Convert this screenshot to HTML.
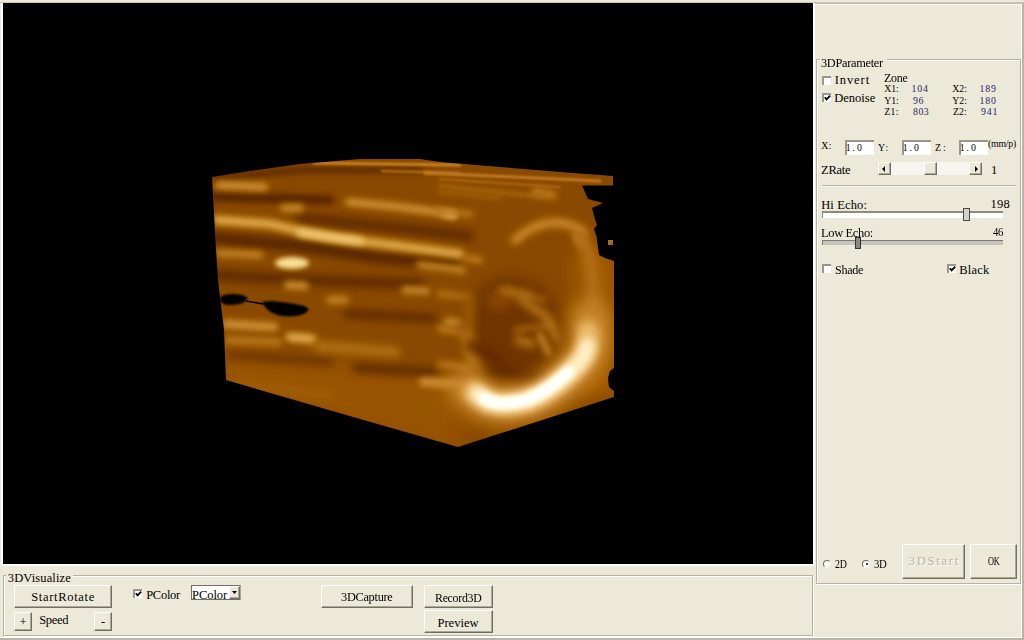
<!DOCTYPE html>
<html><head><meta charset="utf-8"><style>
*{margin:0;padding:0;box-sizing:border-box}
html,body{width:1024px;height:640px;overflow:hidden;background:#ECE9D8;position:relative}
.a{position:absolute}
.t{position:absolute;font-family:"Liberation Serif",serif;white-space:pre;-webkit-text-stroke:0}
.t.n{font-size:12.5px;line-height:12.5px}
.t.s{font-size:9.8px;line-height:9.8px}
.btn{position:absolute;background:#ECE9D8;border-top:1px solid #fff;border-left:1px solid #fff;border-right:1px solid #716F64;border-bottom:1px solid #716F64;box-shadow:inset -1px -1px 0 #ACA899}
.gb{position:absolute;border:1px solid #B5B2A3;box-shadow:inset 1px 1px 0 #fff, 1px 1px 0 #fff}
.cb{position:absolute;width:9px;height:9px;background:#fff;border-top:2px solid #9A9788;border-left:2px solid #9A9788}
.ed{position:absolute;background:#fff;border-top:2px solid #9A9788;border-left:2px solid #9A9788}
.rd{position:absolute;width:8px;height:8px;border-radius:50%;background:#fff;border-top:1px solid #6E6C62;border-left:1px solid #6E6C62;border-right:1px solid #F4F3EE;border-bottom:1px solid #F4F3EE}
</style></head><body>
<div class="a" style="left:0;top:2px;width:1024px;height:1px;background:#C9C6B6"></div>
<div class="a" style="left:1px;top:3px;width:2px;height:563px;background:#fff"></div>
<div class="a" id="vp" style="left:3px;top:3px;width:810px;height:561px;background:#000"></div>
<div class="a" style="left:813px;top:3px;width:2px;height:563px;background:#fff"></div>
<div class="a" style="left:3px;top:564px;width:812px;height:2px;background:#fff"></div>
<div class="a" style="left:815px;top:3px;width:208px;height:1px;background:#C0BDAE"></div>
<div class="a" style="left:815px;top:4px;width:207px;height:1px;background:#F8F7F2"></div>
<div class="a" style="left:1021px;top:4px;width:1px;height:634px;background:#fff"></div>
<div class="a" style="left:1022px;top:3px;width:2px;height:637px;background:#B8B5A6"></div>
<div class="a" style="left:0;top:637px;width:1022px;height:1px;background:#fff"></div>
<div class="a" style="left:0;top:638px;width:1024px;height:2px;background:#B8B5A6"></div>

<div class="gb" style="left:816px;top:59px;width:205px;height:525px"></div>
<div class="a" style="left:820px;top:54px;width:67px;height:10px;background:#ECE9D8"></div>

<div class="cb" style="left:822px;top:76px"></div>
<div class="cb" style="left:822px;top:93px"></div>
<svg class="a" style="left:822px;top:93px" width="10" height="10"><path d="M2.8 4.2 L4.6 6.4 L8.2 2.6" stroke="#000" stroke-width="1.8" fill="none"/></svg>

<div class="ed" style="left:845px;top:140px;width:29px;height:15px"></div>
<div class="ed" style="left:902px;top:140px;width:29px;height:15px"></div>
<div class="ed" style="left:959px;top:140px;width:29px;height:15px"></div>

<div class="a" style="left:878px;top:162px;width:104px;height:13px;background:#F6F5F0"></div>
<div class="btn" style="left:878px;top:162px;width:13px;height:13px"></div>
<svg class="a" style="left:882px;top:166px" width="4" height="6"><path d="M3 0 L3 6 L0 3Z" fill="#000"/></svg>
<div class="btn" style="left:924px;top:162px;width:13px;height:13px"></div>
<div class="btn" style="left:969px;top:162px;width:13px;height:13px"></div>
<svg class="a" style="left:975px;top:166px" width="4" height="6"><path d="M0 0 L0 6 L3 3Z" fill="#000"/></svg>

<div class="a" style="left:822px;top:185px;width:194px;height:1px;background:#B5B2A3"></div>
<div class="a" style="left:822px;top:186px;width:194px;height:1px;background:#fff"></div>

<div class="a" style="left:822px;top:211px;width:181px;height:7px;background:#fff;border-top:2px solid #8E8B7C;border-left:1px solid #8E8B7C"></div>
<div class="a" style="left:963px;top:208px;width:7px;height:13px;background:#D2D1CC;border:1px solid #4A4A48"></div>

<div class="a" style="left:822px;top:240px;width:181px;height:5px;background:#C6C4BC;border-top:1px solid #7C7A6E;border-left:1px solid #7C7A6E"></div>
<div class="a" style="left:855px;top:237px;width:6px;height:12px;background:#8A8985;border:1px solid #333"></div>

<div class="cb" style="left:822px;top:264px"></div>
<div class="cb" style="left:947px;top:264px"></div>
<svg class="a" style="left:947px;top:264px" width="10" height="10"><path d="M2.8 4.2 L4.6 6.4 L8.2 2.6" stroke="#000" stroke-width="1.8" fill="none"/></svg>

<div class="rd" style="left:823px;top:560px"></div>
<div class="rd" style="left:862px;top:560px"></div>
<div class="a" style="left:866px;top:563px;width:2px;height:2px;background:#000;border-radius:1px"></div>
<div class="btn" style="left:902px;top:544px;width:63px;height:35px"></div>
<div class="btn" style="left:970px;top:544px;width:47px;height:35px"></div>

<div class="gb" style="left:3px;top:575px;width:810px;height:61px"></div>
<div class="a" style="left:6px;top:570px;width:67px;height:10px;background:#ECE9D8"></div>
<div class="btn" style="left:14px;top:585px;width:98px;height:23px"></div>
<div class="btn" style="left:14px;top:612px;width:18px;height:19px"></div>
<div class="btn" style="left:94px;top:612px;width:18px;height:19px"></div>
<div class="cb" style="left:133px;top:589px"></div>
<svg class="a" style="left:133px;top:589px" width="10" height="10"><path d="M2.8 4.2 L4.6 6.4 L8.2 2.6" stroke="#000" stroke-width="1.8" fill="none"/></svg>
<div class="a" style="left:191px;top:585px;width:50px;height:15px;background:#fff;border:1px solid #716F64;border-right-color:#ACA899"></div>
<div class="btn" style="left:229px;top:586px;width:11px;height:13px"></div>
<svg class="a" style="left:232px;top:591px" width="6" height="3"><path d="M0 0 L5 0 L2.5 3Z" fill="#000"/></svg>
<div class="btn" style="left:321px;top:585px;width:92px;height:23px"></div>
<div class="btn" style="left:424px;top:585px;width:69px;height:23px"></div>
<div class="btn" style="left:424px;top:610px;width:69px;height:23px"></div>

<svg class="a" style="left:0;top:0" width="1024" height="640" viewBox="0 0 1024 640">
<defs><clipPath id="cc"><path d="M212,177 L250,171 L300,164 L360,159 L420,159 L440,162 L500,167 L560,172 L613,176 L613,185.5 L582,185.5 L588,199 L603,203 L592,208 L595.5,221 L597,225 L594,229 L596.5,236 L599,255 L605,258 L614,261 L614,368 L610,371 L608,378 L609,387 L614,391 L614,397 L458,447 L360,419 L226,380 L224,330 L218,280 L216,250 Z"/></clipPath><filter id="f1_2" color-interpolation-filters="sRGB" filterUnits="userSpaceOnUse" x="150" y="100" width="530" height="400"><feGaussianBlur stdDeviation="1.2"/></filter><filter id="f2" color-interpolation-filters="sRGB" filterUnits="userSpaceOnUse" x="150" y="100" width="530" height="400"><feGaussianBlur stdDeviation="2"/></filter><filter id="f2_5" color-interpolation-filters="sRGB" filterUnits="userSpaceOnUse" x="150" y="100" width="530" height="400"><feGaussianBlur stdDeviation="2.5"/></filter><filter id="f3" color-interpolation-filters="sRGB" filterUnits="userSpaceOnUse" x="150" y="100" width="530" height="400"><feGaussianBlur stdDeviation="3"/></filter><filter id="f3_5" color-interpolation-filters="sRGB" filterUnits="userSpaceOnUse" x="150" y="100" width="530" height="400"><feGaussianBlur stdDeviation="3.5"/></filter><filter id="f4" color-interpolation-filters="sRGB" filterUnits="userSpaceOnUse" x="150" y="100" width="530" height="400"><feGaussianBlur stdDeviation="4"/></filter><filter id="f5" color-interpolation-filters="sRGB" filterUnits="userSpaceOnUse" x="150" y="100" width="530" height="400"><feGaussianBlur stdDeviation="5"/></filter><filter id="f7" color-interpolation-filters="sRGB" filterUnits="userSpaceOnUse" x="150" y="100" width="530" height="400"><feGaussianBlur stdDeviation="7"/></filter><filter id="f8" color-interpolation-filters="sRGB" filterUnits="userSpaceOnUse" x="150" y="100" width="530" height="400"><feGaussianBlur stdDeviation="8"/></filter><filter id="f9" color-interpolation-filters="sRGB" filterUnits="userSpaceOnUse" x="150" y="100" width="530" height="400"><feGaussianBlur stdDeviation="9"/></filter><filter id="f10" color-interpolation-filters="sRGB" filterUnits="userSpaceOnUse" x="150" y="100" width="530" height="400"><feGaussianBlur stdDeviation="10"/></filter><filter id="f1" color-interpolation-filters="sRGB" filterUnits="userSpaceOnUse" x="150" y="100" width="530" height="400"><feGaussianBlur stdDeviation="1"/></filter><filter id="tone" color-interpolation-filters="sRGB" filterUnits="userSpaceOnUse" x="150" y="100" width="530" height="400"><feColorMatrix type="saturate" values="1"/><feComponentTransfer><feFuncR type="linear" slope="1.12" intercept="-0.07"/><feFuncG type="linear" slope="1.12" intercept="-0.07"/><feFuncB type="linear" slope="1.12" intercept="-0.07"/></feComponentTransfer></filter></defs>
<g clip-path="url(#cc)"><g filter="url(#tone)">
<rect x="200" y="150" width="430" height="310" fill="#8C5208"/>
<path d="M215,340 L460,380 L460,450 L215,392Z" fill="#985C0C" filter="url(#f10)"/>
<path d="M575,250 L615,250 L615,395 L575,395Z" fill="#A2620F" filter="url(#f8)"/>
<path d="M214,178 L300,170 L420,170" stroke="#603304" stroke-width="6" fill="none" stroke-linecap="round" filter="url(#f3)"/>
<path d="M214,197 L330,200" stroke="#5C3003" stroke-width="9" fill="none" stroke-linecap="round" filter="url(#f3)"/>
<path d="M300,218 L380,226 L470,236" stroke="#603304" stroke-width="9" fill="none" stroke-linecap="round" filter="url(#f4)"/>
<path d="M214,238 L300,246 L380,258 L455,264" stroke="#5C3003" stroke-width="11" fill="none" stroke-linecap="round" filter="url(#f4)"/>
<path d="M214,275 L300,280 L420,284" stroke="#623404" stroke-width="10" fill="none" stroke-linecap="round" filter="url(#f4)"/>
<path d="M347,314 L433,318" stroke="#603304" stroke-width="8" fill="none" stroke-linecap="round" filter="url(#f4)"/>
<path d="M357,368 L433,372" stroke="#663805" stroke-width="10" fill="none" stroke-linecap="round" filter="url(#f4)"/>
<path d="M230,355 L330,362" stroke="#6E3C06" stroke-width="8" fill="none" stroke-linecap="round" filter="url(#f5)"/>
<path d="M314,163 L460,165" stroke="#C48636" stroke-width="3" fill="none" stroke-linecap="round" filter="url(#f1_2)"/>
<path d="M382,171 L460,173" stroke="#B07428" stroke-width="2.5" fill="none" stroke-linecap="round" filter="url(#f1_2)"/>
<path d="M425,173 L600,181" stroke="#BE7E36" stroke-width="3" fill="none" stroke-linecap="round" filter="url(#f1_2)"/>
<path d="M440,179 L560,187" stroke="#A86A22" stroke-width="2.5" fill="none" stroke-linecap="round" filter="url(#f1_2)"/>
<path d="M219,185 L264,187" stroke="#C89040" stroke-width="8" fill="none" stroke-linecap="round" filter="url(#f3)"/>
<path d="M284,208 L300,208" stroke="#C08838" stroke-width="8" fill="none" stroke-linecap="round" filter="url(#f3)"/>
<path d="M349,202 L400,207 L452,214" stroke="#C89040" stroke-width="8" fill="none" stroke-linecap="round" filter="url(#f3)"/>
<path d="M446,214 L454,215" stroke="#E0B868" stroke-width="7" fill="none" stroke-linecap="round" filter="url(#f2_5)"/>
<path d="M217,220 L270,224 L300,231 L335,238 L400,246 L460,254" stroke="#D8A850" stroke-width="9" fill="none" stroke-linecap="round" filter="url(#f3)"/>
<path d="M300,233 L360,241" stroke="#EAC47A" stroke-width="7" fill="none" stroke-linecap="round" filter="url(#f3)"/>
<path d="M219,253 L260,255" stroke="#C08838" stroke-width="7" fill="none" stroke-linecap="round" filter="url(#f3)"/>
<path d="M420,265 L462,270" stroke="#BC8432" stroke-width="8" fill="none" stroke-linecap="round" filter="url(#f3)"/>
<path d="M288,285 L305,286" stroke="#C89040" stroke-width="8" fill="none" stroke-linecap="round" filter="url(#f3)"/>
<path d="M330,300 L345,300" stroke="#BC8432" stroke-width="8" fill="none" stroke-linecap="round" filter="url(#f3)"/>
<path d="M405,290 L426,291" stroke="#C08838" stroke-width="8" fill="none" stroke-linecap="round" filter="url(#f3)"/>
<path d="M448,322 L462,323" stroke="#C08838" stroke-width="9" fill="none" stroke-linecap="round" filter="url(#f3)"/>
<path d="M226,324 L274,327" stroke="#C89040" stroke-width="9" fill="none" stroke-linecap="round" filter="url(#f3)"/>
<path d="M228,340 L278,342" stroke="#B47A2C" stroke-width="8" fill="none" stroke-linecap="round" filter="url(#f3)"/>
<path d="M290,337 L312,339" stroke="#DAAA54" stroke-width="9" fill="none" stroke-linecap="round" filter="url(#f3)"/>
<path d="M318,346 L396,352" stroke="#B07628" stroke-width="10" fill="none" stroke-linecap="round" filter="url(#f4)"/>
<path d="M423,382 L457,384" stroke="#C89040" stroke-width="9" fill="none" stroke-linecap="round" filter="url(#f3)"/>
<path d="M240,385 L330,395" stroke="#A06418" stroke-width="10" fill="none" stroke-linecap="round" filter="url(#f5)"/>
<path d="M440,212 L470,214" stroke="#B47A2A" stroke-width="7" fill="none" stroke-linecap="round" filter="url(#f3)"/>
<path d="M466,258 L480,260" stroke="#B87C2C" stroke-width="7" fill="none" stroke-linecap="round" filter="url(#f3)"/>
<path d="M440,294 L468,297" stroke="#B07426" stroke-width="7" fill="none" stroke-linecap="round" filter="url(#f3)"/>
<path d="M440,329 L468,333" stroke="#B87C2C" stroke-width="7" fill="none" stroke-linecap="round" filter="url(#f3)"/>
<path d="M440,364 L470,368" stroke="#B47828" stroke-width="7" fill="none" stroke-linecap="round" filter="url(#f3)"/>
<ellipse cx="292" cy="263" rx="17" ry="6" fill="#F0D898" filter="url(#f2_5)"/>
<ellipse cx="535" cy="309" rx="8" ry="11" fill="#E8CC94" filter="url(#f2_5)"/>
<ellipse cx="512" cy="328" rx="48" ry="52" fill="#744008" filter="url(#f7)"/>
<ellipse cx="500" cy="300" rx="14" ry="10" fill="#8A4E10" filter="url(#f5)"/>
<path d="M515,240 Q550,210 584,232" stroke="#C48838" stroke-width="9" fill="none" stroke-linecap="round" filter="url(#f3_5)"/>
<path d="M535,192 L552,195" stroke="#B87C2C" stroke-width="9" fill="none" stroke-linecap="round" filter="url(#f3)"/>
<path d="M576,236 L582,245" stroke="#B87C2C" stroke-width="9" fill="none" stroke-linecap="round" filter="url(#f3)"/>
<path d="M440,186 L545,197" stroke="#A86C22" stroke-width="4" fill="none" stroke-linecap="round" filter="url(#f2)"/>
<path d="M440,192 L500,198" stroke="#A06418" stroke-width="4" fill="none" stroke-linecap="round" filter="url(#f2)"/>
<path d="M584,238 Q600,290 590,330" stroke="#B07428" stroke-width="12" fill="none" stroke-linecap="round" filter="url(#f5)"/>
<path d="M470,300 Q465,340 478,370" stroke="#9E6218" stroke-width="10" fill="none" stroke-linecap="round" filter="url(#f5)"/>
<path d="M500,290 L545,300" stroke="#A46A20" stroke-width="5" fill="none" stroke-linecap="round" filter="url(#f3)"/>
<path d="M515,330 L550,325" stroke="#A86E22" stroke-width="5" fill="none" stroke-linecap="round" filter="url(#f3)"/>
<path d="M522,300 L548,318 L556,338" stroke="#B87C2C" stroke-width="8" fill="none" stroke-linecap="round" filter="url(#f4)"/>
<path d="M505,290 L530,296" stroke="#A86E22" stroke-width="8" fill="none" stroke-linecap="round" filter="url(#f4)"/>
<path d="M540,335 L548,352" stroke="#C08434" stroke-width="7" fill="none" stroke-linecap="round" filter="url(#f3)"/>
<path d="M490,372 L540,378" stroke="#5E2E04" stroke-width="10" fill="none" stroke-linecap="round" filter="url(#f5)"/>
<path d="M465,335 L472,362" stroke="#B47A2C" stroke-width="10" fill="none" stroke-linecap="round" filter="url(#f5)"/>
<path d="M518,340 L532,344" stroke="#B8802E" stroke-width="8" fill="none" stroke-linecap="round" filter="url(#f4)"/>
<path d="M470,345 L500,360" stroke="#683405" stroke-width="10" fill="none" stroke-linecap="round" filter="url(#f5)"/>
<path d="M468,388 C482,404 500,410 530,401 C550,394 570,378 582,362 S592,335 590,320" stroke="#C48838" stroke-width="40" fill="none" stroke-linecap="round" filter="url(#f9)"/>
<path d="M474,392 C486,404 500,408 530,400 C548,393 566,378 578,364 S588,345 588,332" stroke="#E2B870" stroke-width="22" fill="none" stroke-linecap="round" filter="url(#f5)"/>
<path d="M478,394 C488,404 502,407 528,400 C546,393 562,380 574,368 S584,356 587,346" stroke="#F8E8C4" stroke-width="16" fill="none" stroke-linecap="round" filter="url(#f4)"/>
<path d="M484,398 C492,404 505,405 526,400 C542,394 556,384 568,372" stroke="#FFFCF2" stroke-width="11" fill="none" stroke-linecap="round" filter="url(#f2_5)"/>
</g><path d="M220,297 C226,293 240,293 247,297 C249,302 240,305 230,305 C225,305 220,303 220,300 Z M262,302 C270,300 285,302 300,305 C306,306 310,309 308,311 C303,316 290,318 278,315 C270,313 265,308 262,302 Z" fill="#000" filter="url(#f1)"/><path d="M246,301 L263,304" stroke="#000" stroke-width="1.6"/>
</g>
<rect x="608" y="240" width="5" height="5" fill="#A86A1E"/>
</svg>
<div class="t n" style="left:821.10px;top:56.62px;letter-spacing:-0.300px;color:#000;transform:scaleX(0.9872);transform-origin:0 0">3DParameter</div>
<div class="t n" style="left:834.70px;top:74.32px;letter-spacing:0.920px;color:#000">Invert</div>
<div class="t n" style="left:834.30px;top:91.52px;letter-spacing:-0.000px;color:#000">Denoise</div>
<div class="t n" style="left:883.50px;top:72.42px;letter-spacing:-0.300px;color:#000;transform:scaleX(0.9592);transform-origin:0 0">Zone</div>
<div class="t s" style="left:884.30px;top:84.21px;letter-spacing:-0.100px;color:#000">X1:</div>
<div class="t s" style="left:911.40px;top:84.21px;letter-spacing:0.900px;color:#25256E">104</div>
<div class="t s" style="left:952.20px;top:84.21px;letter-spacing:0.100px;color:#000">X2:</div>
<div class="t s" style="left:979.40px;top:84.21px;letter-spacing:0.900px;color:#25256E">189</div>
<div class="t s" style="left:884.30px;top:95.61px;letter-spacing:-0.100px;color:#000">Y1:</div>
<div class="t s" style="left:913.00px;top:95.61px;letter-spacing:0.500px;color:#25256E">96</div>
<div class="t s" style="left:952.20px;top:95.61px;letter-spacing:0.100px;color:#000">Y2:</div>
<div class="t s" style="left:979.40px;top:95.61px;letter-spacing:0.900px;color:#25256E">180</div>
<div class="t s" style="left:884.30px;top:107.01px;letter-spacing:0.300px;color:#000">Z1:</div>
<div class="t s" style="left:913.00px;top:107.01px;letter-spacing:0.500px;color:#25256E">803</div>
<div class="t s" style="left:953.00px;top:107.01px;letter-spacing:0.100px;color:#000">Z2:</div>
<div class="t s" style="left:981.00px;top:107.01px;letter-spacing:0.900px;color:#25256E">941</div>
<div class="t s" style="left:821.20px;top:141.41px;letter-spacing:0.500px;color:#000">X:</div>
<div class="t s" style="left:845.80px;top:143.01px;letter-spacing:1.900px;color:#000">1.0</div>
<div class="t s" style="left:878.10px;top:142.61px;letter-spacing:1.300px;color:#000">Y:</div>
<div class="t s" style="left:902.80px;top:143.01px;letter-spacing:1.900px;color:#000">1.0</div>
<div class="t s" style="left:935.00px;top:142.61px;letter-spacing:2.100px;color:#000">Z:</div>
<div class="t s" style="left:959.80px;top:143.01px;letter-spacing:1.900px;color:#000">1.0</div>
<div class="t s" style="left:988.00px;top:139.31px;letter-spacing:-0.220px;color:#000">(mm/p)</div>
<div class="t n" style="left:821.10px;top:163.62px;letter-spacing:-0.300px;color:#000">ZRate</div>
<div class="t n" style="left:990.90px;top:163.62px;letter-spacing:0.600px;color:#000">1</div>
<div class="t n" style="left:821.20px;top:198.62px;letter-spacing:0.143px;color:#000">Hi Echo:</div>
<div class="t n" style="left:990.60px;top:197.82px;letter-spacing:0.200px;color:#000">198</div>
<div class="t n" style="left:821.20px;top:227.22px;letter-spacing:-0.340px;color:#000;transform:scaleX(0.9953);transform-origin:0 0">Low Echo:</div>
<div class="t n" style="left:993.00px;top:226.42px;letter-spacing:-0.300px;color:#000;transform:scaleX(0.8552);transform-origin:0 0">46</div>
<div class="t n" style="left:835.20px;top:263.92px;letter-spacing:-0.300px;color:#000;transform:scaleX(0.9663);transform-origin:0 0">Shade</div>
<div class="t n" style="left:959.30px;top:263.92px;letter-spacing:0.200px;color:#000">Black</div>
<div class="t n" style="left:835.10px;top:558.42px;letter-spacing:-0.300px;color:#000;transform:scaleX(0.7942);transform-origin:0 0">2D</div>
<div class="t n" style="left:874.40px;top:558.42px;letter-spacing:-0.300px;color:#000;transform:scaleX(0.8611);transform-origin:0 0">3D</div>
<div class="t n" style="left:908.60px;top:555.32px;letter-spacing:1.800px;color:#B8B4A6;text-shadow:1px 1px 0 #fff">3DStart</div>
<div class="t n" style="left:987.70px;top:555.32px;letter-spacing:-0.300px;color:#000;transform:scaleX(0.6650);transform-origin:0 0">OK</div>
<div class="t n" style="left:7.80px;top:571.52px;letter-spacing:0.120px;color:#000">3DVisualize</div>
<div class="t n" style="left:31.20px;top:590.72px;letter-spacing:0.680px;color:#000">StartRotate</div>
<div class="t n" style="left:19.40px;top:615.92px;letter-spacing:0.600px;color:#000">+</div>
<div class="t n" style="left:39.20px;top:613.52px;letter-spacing:-0.300px;color:#000">Speed</div>
<div class="t n" style="left:101.00px;top:615.72px;letter-spacing:0.600px;color:#000">-</div>
<div class="t n" style="left:146.20px;top:588.92px;letter-spacing:-0.280px;color:#000">PColor</div>
<div class="t n" style="left:192.00px;top:588.92px;letter-spacing:-0.040px;color:#000">PColor</div>
<div class="t n" style="left:341.30px;top:591.42px;letter-spacing:-0.300px;color:#000;transform:scaleX(0.9876);transform-origin:0 0">3DCapture</div>
<div class="t n" style="left:435.20px;top:592.22px;letter-spacing:-0.300px;color:#000;transform:scaleX(0.9497);transform-origin:0 0">Record3D</div>
<div class="t n" style="left:437.50px;top:616.62px;letter-spacing:0.000px;color:#000">Preview</div>
</body></html>
